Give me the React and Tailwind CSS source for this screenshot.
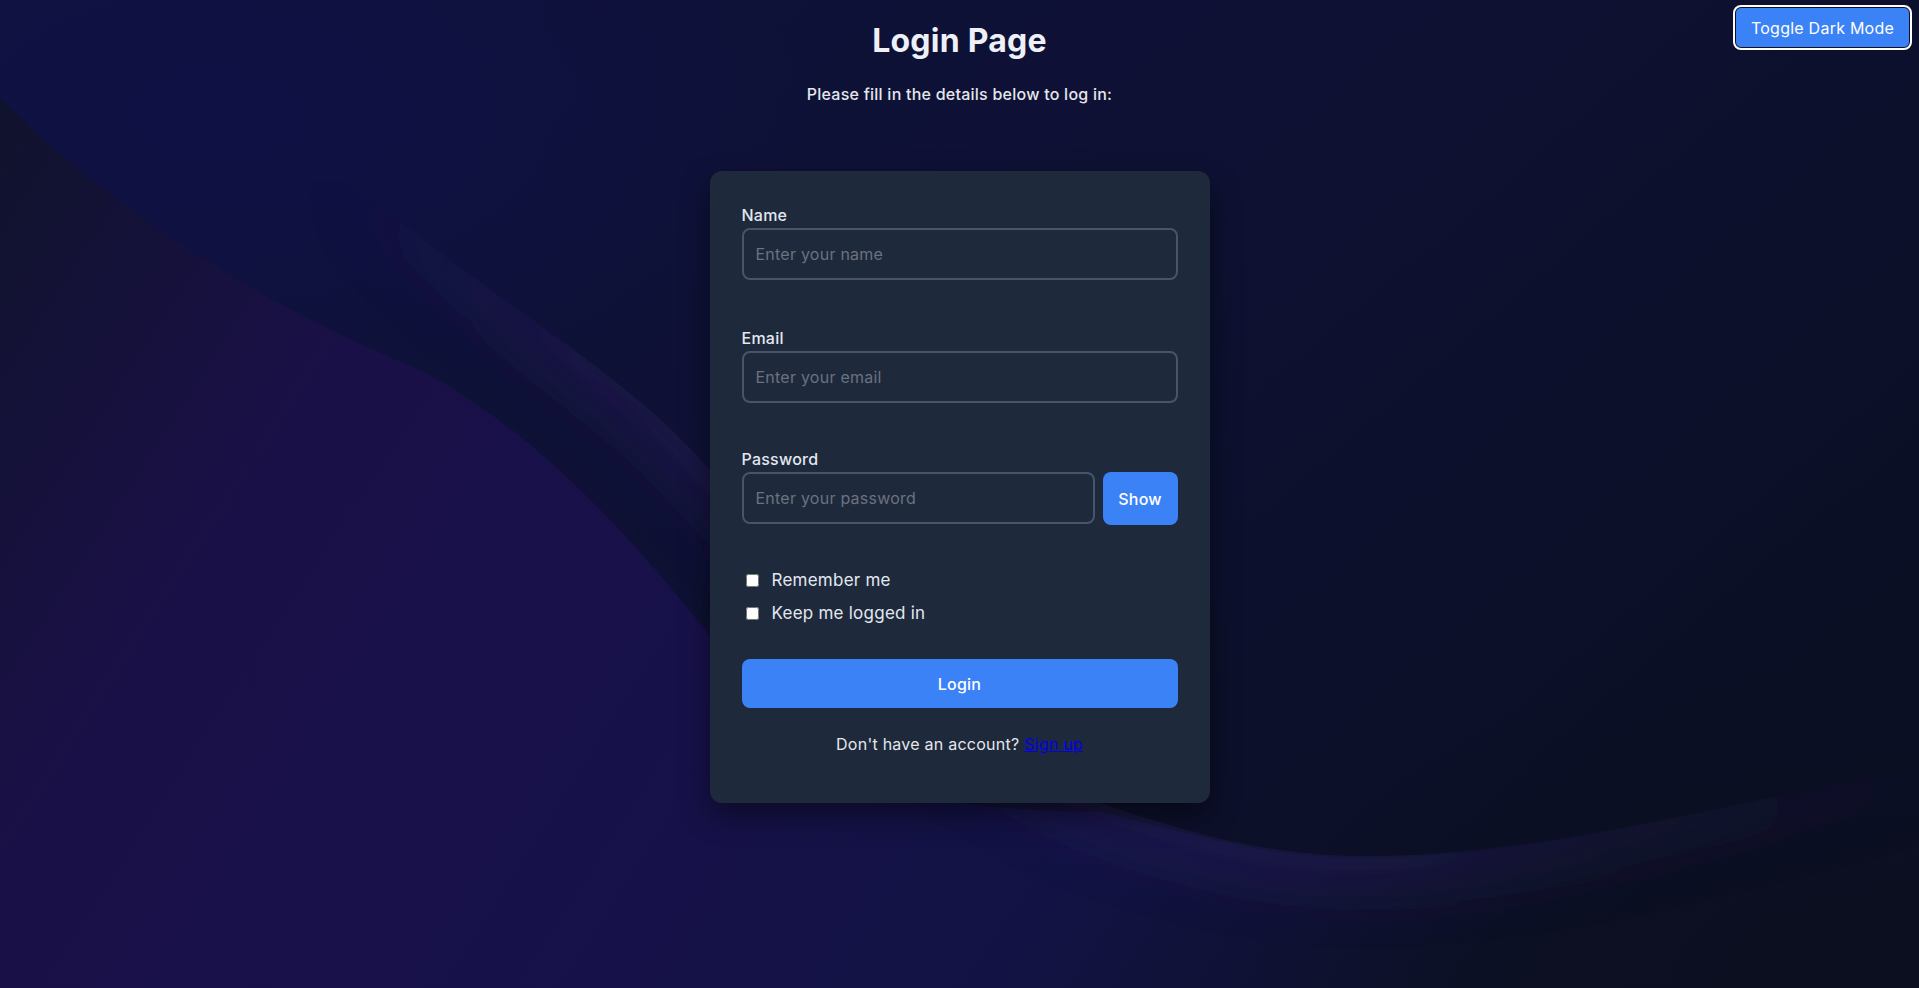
import { useState } from "react";

// wave outlines, in the 1919x988 page space
const EDGE =
  "M340,180 C400,220 430,245 459,267 C560,340 650,400 707,467 C850,620 980,760 1100,803 C1180,830 1260,855 1361,856 C1550,858 1750,795 1919,770";
const EDGE_SHAPE = EDGE + " L1919,988 L0,988 L0,180 Z";
const WAVE =
  "M0,97 C100,200 250,300 413,367 C560,440 690,600 800,760 C900,800 1000,812 1100,812 C1200,835 1260,858 1361,858 C1550,860 1750,797 1919,772 L1919,988 L0,988 Z";

function Backdrop() {
  return (
    <svg
      className="absolute inset-0 h-full w-full"
      viewBox="0 0 1919 988"
      preserveAspectRatio="none"
      aria-hidden="true"
    >
      <defs>
        <linearGradient id="sky" x1="0" y1="0" x2="1" y2="0.6">
          <stop offset="0" stopColor="#10123e" />
          <stop offset="0.5" stopColor="#0e1134" />
          <stop offset="1" stopColor="#0b0f24" />
        </linearGradient>
        <radialGradient id="skyGlow" cx="0.12" cy="0.12" r="0.3">
          <stop offset="0" stopColor="#0f1148" stopOpacity="0.8" />
          <stop offset="1" stopColor="#0f1148" stopOpacity="0" />
        </radialGradient>
        <linearGradient id="wave" x1="0" y1="0" x2="1" y2="0.3">
          <stop offset="0" stopColor="#10132c" />
          <stop offset="0.25" stopColor="#1a1048" />
          <stop offset="0.5" stopColor="#17114a" />
          <stop offset="0.75" stopColor="#121344" />
          <stop offset="1" stopColor="#0c1024" />
        </linearGradient>
        <radialGradient id="corner" cx="1" cy="1" r="0.35">
          <stop offset="0" stopColor="#0b0f1f" stopOpacity="0.9" />
          <stop offset="1" stopColor="#0b0f1f" stopOpacity="0" />
        </radialGradient>
        <linearGradient id="edgeFade" gradientUnits="userSpaceOnUse" x1="340" y1="0" x2="1919" y2="0">
          <stop offset="0" stopColor="#2e2264" stopOpacity="0" />
          <stop offset="0.15" stopColor="#2e2264" stopOpacity="1" />
          <stop offset="0.65" stopColor="#2e2264" stopOpacity="1" />
          <stop offset="1" stopColor="#2e2264" stopOpacity="0.15" />
        </linearGradient>
        <filter
          id="soft"
          filterUnits="userSpaceOnUse"
          x="-300"
          y="-300"
          width="2600"
          height="1600"
        >
          <feGaussianBlur stdDeviation="34" />
        </filter>
        <clipPath id="edgeClip">
          <path d={EDGE_SHAPE} />
        </clipPath>
      </defs>

      <rect width="1919" height="988" fill="url(#sky)" />
      <rect width="1919" height="988" fill="url(#skyGlow)" />
      <path d={WAVE} fill="url(#wave)" />
      <rect width="1919" height="988" fill="url(#corner)" />
      <g clipPath="url(#edgeClip)">
        <path
          d={EDGE}
          fill="none"
          stroke="url(#edgeFade)"
          strokeWidth="36"
          opacity="0.75"
          filter="url(#soft)"
        />
      </g>
    </svg>
  );
}

function Field({ label, type = "text", placeholder, className = "" }) {
  return (
    <div className={className}>
      <label className="mb-px block text-base font-medium leading-6 text-[#e2e8f0]">
        {label}
      </label>
      <input
        type={type}
        placeholder={placeholder}
        className="block h-[52px] w-full rounded-lg border-2 border-[#475569] bg-transparent px-3 text-base tracking-[0.015em] text-white outline-none placeholder:text-[#6b7280]"
      />
    </div>
  );
}

export default function App() {
  const [showPassword, setShowPassword] = useState(false);
  const [dark, setDark] = useState(true);

  return (
    <div className="relative h-screen w-full overflow-hidden bg-[#0e1130] font-['Inter',sans-serif] tracking-[0.015em]">
      <Backdrop />

      <button
        onClick={() => setDark(!dark)}
        className="absolute right-[9px] top-[7px] z-10 h-[41px] w-[175px] rounded-md border border-[#0d1128] bg-[#3b82f6] text-base tracking-[0.015em] text-white outline-2 outline-white"
      >
        Toggle Dark Mode
      </button>

      <main className="relative flex flex-col items-center pt-[21px]">
        <h1 className="text-[32px] font-bold leading-10 text-[#eef0f7]">Login Page</h1>
        <p className="mt-[21px] text-base font-medium leading-6 text-[#e5e7eb]">
          Please fill in the details below to log in:
        </p>

        <form
          onSubmit={(e) => e.preventDefault()}
          className="mt-[65px] w-[500px] rounded-xl bg-[#1e293b] px-8 pb-[47px] pt-8 shadow-[0_12px_30px_rgba(0,0,0,0.45)]"
        >
          <Field label="Name" placeholder="Enter your name" className="mb-[46px]" />
          <Field label="Email" type="email" placeholder="Enter your email" className="mb-[44px]" />

          <label className="mb-px block text-base font-medium leading-6 text-[#e2e8f0]">
            Password
          </label>
          <div className="flex gap-2">
            <input
              type={showPassword ? "text" : "password"}
              placeholder="Enter your password"
              className="block h-[52px] min-w-0 flex-1 rounded-lg border-2 border-[#475569] bg-transparent px-3 text-base tracking-[0.015em] text-white outline-none placeholder:text-[#6b7280]"
            />
            <button
              type="button"
              onClick={() => setShowPassword(!showPassword)}
              className="h-[53px] w-[75px] rounded-lg bg-[#3b82f6] text-base font-medium tracking-[0.015em] text-white"
            >
              {showPassword ? "Hide" : "Show"}
            </button>
          </div>

          {/* Checkboxes */}
          <div className="mt-[42px] flex flex-col gap-[6px]">
            <label className="flex items-center text-[17px] leading-[27px] text-[#e2e8f0]">
              <input type="checkbox" className="ml-1 h-[13px] w-[13px]" />
              <span className="ml-[13px]">Remember me</span>
            </label>
            <label className="flex items-center text-[17px] leading-[27px] text-[#e2e8f0]">
              <input type="checkbox" className="ml-1 h-[13px] w-[13px]" />
              <span className="ml-[13px]">Keep me logged in</span>
            </label>
          </div>

          <button
            type="submit"
            className="mt-8 h-[49px] w-full rounded-lg bg-[#3b82f6] text-base font-medium tracking-[0.015em] text-white"
          >
            Login
          </button>

          <p className="mt-6 text-center text-base leading-6 text-[#e5e7eb]">
            Don't have an account?{" "}
            <a href="#" className="text-[#0000ee] underline">
              Sign up
            </a>
          </p>
        </form>
      </main>
    </div>
  );
}
